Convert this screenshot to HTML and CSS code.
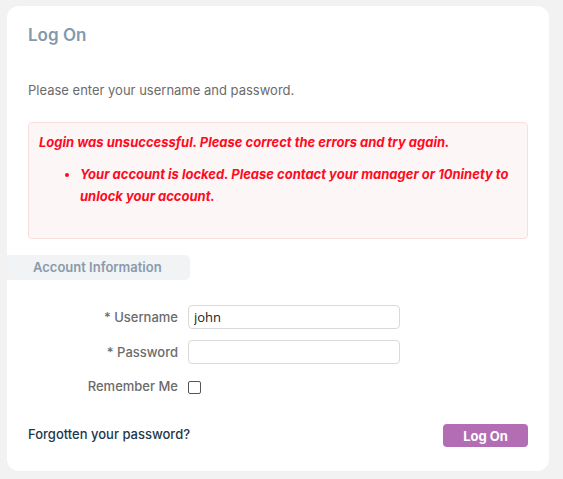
FILE: index.html
```html
<!DOCTYPE html>
<html>
<head>
<meta charset="utf-8">
<link rel="stylesheet" href="styles.css">
</head>
<body>
<div class="card">
  <h1 class="title">Log On</h1>
  <p class="intro">Please enter your username and password.</p>
  <div class="errors">
    <p class="err-head">Login was unsuccessful. Please correct the errors and try again.</p>
    <ul class="err-list">
      <li>Your account is locked. Please contact your manager or 10ninety to unlock your account.</li>
    </ul>
  </div>
  <div class="legend">Account Information</div>
  <div class="form">
    <label class="lbl">* Username</label>
    <input class="field" type="text" value="john">
    <label class="lbl">* Password</label>
    <input class="field" type="password">
    <label class="lbl lbl-check">Remember Me</label>
    <span class="check"></span>
  </div>
  <div class="footer">
    <a class="forgot">Forgotten your password?</a>
    <button class="btn">Log On</button>
  </div>
</div>
</body>
</html>
```
FILE: styles.css
```css
html, body { margin: 0; padding: 0; }
body {
  background: #f2f2f2;
  font-family: Inter, "Noto Sans", sans-serif;
  font-size: 13px;
  padding: 6px 14px 8px 7px;
}
.card {
  background: #fff;
  border-radius: 12px;
  padding: 19px 21px 23px 21px;
  height: 423px;
}
.title {
  margin: 0;
  font-size: 17px;
  font-weight: 600;
  color: #8399ae;
  line-height: 20px;
  height: 20px;
}
.intro {
  margin: 37px 0 0;
  color: #6b6b6b;
  line-height: 16px;
}
.errors {
  margin-top: 24px;
  background: #fdf6f6;
  border: 1px solid #fadede;
  border-radius: 4px;
  height: 117px;
  box-sizing: border-box;
  color: #ff0a1e;
  font-weight: 700;
  font-style: italic;
  padding: 9px 6px 8px 10px;
}
.err-head { margin: 0; line-height: 20px; }
.err-list { margin: 11px 0 0; padding-left: 41px; line-height: 22px; }
.err-list li::marker { font-style: normal; }
.legend {
  margin: 16px 0 0 -21px;
  width: 157px;
  height: 25px;
  background: #f1f3f5;
  border-radius: 0 5px 5px 0;
  color: #8a9aab;
  font-weight: 600;
  line-height: 25px;
  padding-left: 26px;
}
.form {
  display: grid;
  grid-template-columns: 150px 212px;
  column-gap: 10px;
  row-gap: 11px;
  align-items: center;
  margin-top: 25px;
}
.lbl {
  text-align: right;
  color: #6b6b6b;
  font-weight: 500;
}
.lbl-check { margin-top: 3px; }
.field {
  box-sizing: border-box;
  height: 24px;
  width: 212px;
  border: 1px solid #d9d9d9;
  border-radius: 4px;
  padding: 0 5px;
  font-family: "Open Sans", sans-serif;
  font-size: 13px;
  color: #222;
  outline: none;
}
.check {
  width: 11px;
  height: 11px;
  border: 1px solid #555;
  border-radius: 2px;
  margin-top: 6px;
}
.footer {
  display: flex;
  justify-content: space-between;
  align-items: center;
  margin-top: 30px;
}
.forgot {
  color: #23374b;
  font-weight: 500;
  margin-top: -4px;
}
.btn {
  width: 85px;
  height: 23px;
  border: none;
  border-radius: 4px;
  background: #b36db5;
  color: #fff;
  font-family: Inter, sans-serif;
  font-weight: 700;
  font-size: 13px;
  padding: 0;
}
```
